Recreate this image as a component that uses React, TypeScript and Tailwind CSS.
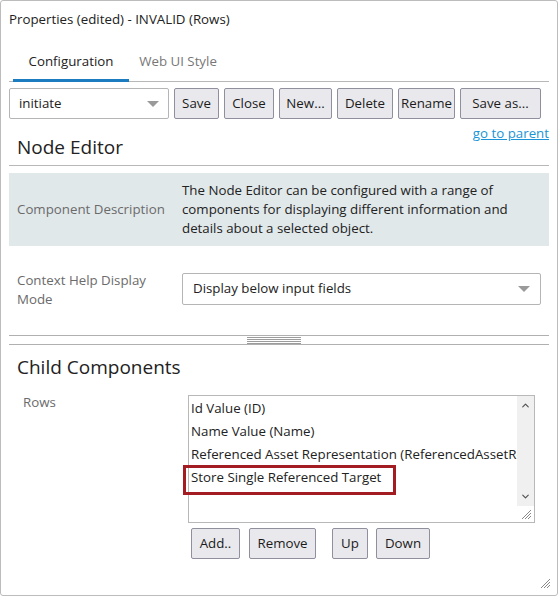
import { ChevronUp, ChevronDown } from "lucide-react"

const font = { fontFamily: '"Segoe UI", "Open Sans", "Noto Sans", sans-serif' }

function Btn({ children, className = "" }: { children: React.ReactNode; className?: string }) {
    return (
        <button className={`h-[31px] bg-[#e9e9ed] border border-[#8f8f9d] rounded-[2px] text-[13.3px] text-[#1b1b1b] whitespace-nowrap flex items-center justify-center ${className}`}>
            {children}
        </button>
    )
}

function Caret() {
    return <div className="w-0 h-0 border-l-[6px] border-r-[6px] border-t-[6px] border-l-transparent border-r-transparent border-t-[#9a9a9a]" />
}

function Grip({ className = "" }: { className?: string }) {
    return (
        <svg width="12" height="12" viewBox="0 0 12 12" className={className}>
            <path d="M11 2 L2 11 M11 5 L5 11 M11 8 L8 11" stroke="#8a8a8a" strokeWidth="1" />
        </svg>
    )
}

export default function App() {
    const rows = [
        "Id Value (ID)",
        "Name Value (Name)",
        "Referenced Asset Representation (ReferencedAssetRepresentation)",
        "Store Single Referenced Target",
    ]

    return (
        <div className="w-[559px] h-[597px] bg-white" style={font}>
            <div className="relative w-[558px] h-[596px] border border-[#bcbcbc] rounded-[3px] text-[#222] text-[13.3px]">
                {/* title */}
                <div className="pl-[8px] pt-[9px] h-[38px] text-[#222]">Properties (edited) - INVALID (Rows)</div>

                {/* tabs */}
                <div className="mx-[8px] mt-[5px] flex border-b border-[#b8b8b8] h-[38px]">
                    <div className="ml-[4px] w-[116px] flex items-center justify-center border-b-[3px] border-[#1b7dc0] -mb-[1px] pt-[1px] text-[#222]">Configuration</div>
                    <div className="ml-[2px] w-[94px] flex items-center justify-center pb-[1px] text-[#777]">Web UI Style</div>
                </div>

                {/* toolbar */}
                <div className="mt-[6px] ml-[8px] flex gap-[5px]">
                    <div className="w-[160px] h-[31px] border border-[#b5b5b5] rounded-[2px] flex items-center justify-between pl-[9px] pr-[9px]">
                        <span>initiate</span>
                        <Caret />
                    </div>
                    <Btn className="w-[45px]">Save</Btn>
                    <Btn className="w-[50px]">Close</Btn>
                    <Btn className="w-[53px]">New...</Btn>
                    <Btn className="w-[56px]">Delete</Btn>
                    <Btn className="w-[57px]">Rename</Btn>
                    <Btn className="w-[81px]">Save as...</Btn>
                </div>

                {/* go to parent */}
                <div className="flex justify-end mr-[8px] mt-[5px] h-[18px]">
                    <a className="text-[#1a94d6] underline leading-[18px]">go to parent</a>
                </div>

                {/* Node Editor */}
                <div className="mx-[8px] border-b border-[#b8b8b8] h-[24px] flex items-end">
                    <div className="pl-[8px] text-[19px] leading-[28px] text-[#222] pb-[4px]">Node Editor</div>
                </div>

                <div className="mx-[8px] mt-[7px] bg-[#e1e8ea] h-[73px] flex items-center">
                    <div className="w-[173px] pl-[8px] text-[#6b6b6b]">Component Description</div>
                    <div className="w-[345px] leading-[19px] text-[#222]">
                        The Node Editor can be configured with a range of components for displaying different information and details about a selected object.
                    </div>
                </div>

                <div className="mx-[8px] mt-[27px] flex">
                    <div className="w-[173px] pl-[8px] text-[#6b6b6b] leading-[19px] -mt-[2px]">Context Help Display<br />Mode</div>
                    <div className="w-[359px] h-[32px] border border-[#b5b5b5] rounded-[2px] flex items-center justify-between pl-[10px] pr-[10px]">
                        <span>Display below input fields</span>
                        <Caret />
                    </div>
                </div>

                {/* splitter */}
                <div className="mx-[8px] mt-[26px] border-t border-b border-[#b0b0b0] h-[10px] flex justify-center items-center">
                    <div className="w-[54px] flex flex-col gap-[1px] -ml-[10px]">
                        <div className="h-[1px] bg-[#9c9c9c]" />
                        <div className="h-[1px] bg-[#9c9c9c]" />
                        <div className="h-[1px] bg-[#9c9c9c]" />
                        <div className="h-[1px] bg-[#9c9c9c]" />
                    </div>
                </div>

                {/* Child Components */}
                <div className="pl-[16px] mt-[8px] text-[19px] leading-[28px] text-[#222]">Child Components</div>

                <div className="mt-[14px] flex">
                    <div className="w-[187px] pl-[22px] text-[#6b6b6b] -mt-[2px]">Rows</div>
                    <div>
                        <div className="relative w-[347px] h-[128px] border border-[#b8b8b8] flex">
                            <div className="flex-1 overflow-hidden pt-[1px] pl-[2px]">
                                {rows.map((r, i) => (
                                    <div key={i} className="h-[23px] leading-[23px] whitespace-nowrap text-[#222]">{r}</div>
                                ))}
                            </div>
                            <div className="w-[17px] bg-[#f0f0f0] flex flex-col justify-between items-center py-[4px] mb-[16px]">
                                <ChevronUp size={11} strokeWidth={2.5} color="#505050" />
                                <ChevronDown size={11} strokeWidth={2.5} color="#505050" />
                            </div>
                            <Grip className="absolute right-[2px] bottom-[2px]" />
                            <div className="absolute left-[-6px] top-[69px] w-[213px] h-[30px] border-[3px] border-[#a31c22]" />
                        </div>
                        <div className="mt-[5px] ml-[3px] flex">
                            <Btn className="w-[49px]">Add..</Btn>
                            <Btn className="ml-[9px] w-[67px]">Remove</Btn>
                            <Btn className="ml-[16px] w-[36px]">Up</Btn>
                            <Btn className="ml-[8px] w-[54px]">Down</Btn>
                        </div>
                    </div>
                </div>

                <Grip className="absolute right-[6px] bottom-[6px]" />
            </div>
        </div>
    )
}
